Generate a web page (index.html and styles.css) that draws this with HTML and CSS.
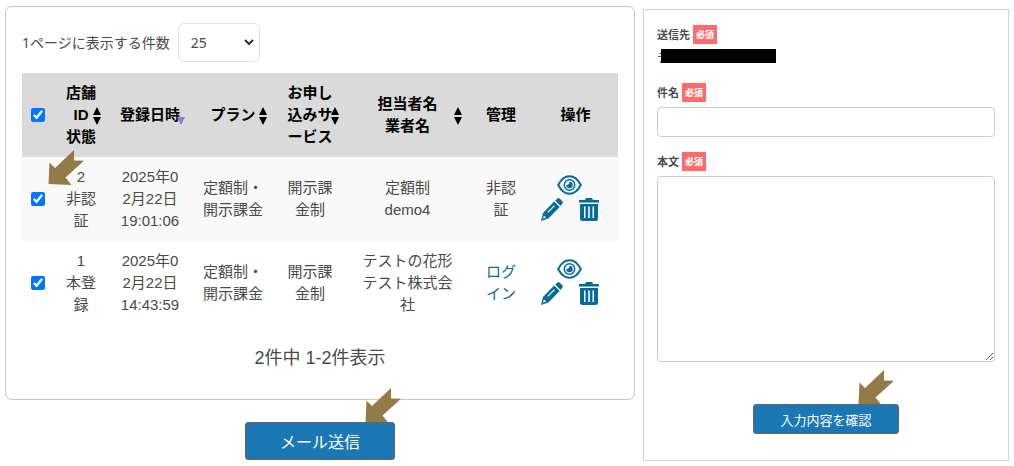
FILE: index.html
```
<!DOCTYPE html>
<html lang="ja">
<head>
	<meta charset="utf-8">
	<meta name="viewport" content="width=device-width, initial-scale=1">
	<title>メール送信</title>
	<link rel="stylesheet" href="styles.css">
</head>
<body>
	<svg class="defs" aria-hidden="true">
		<symbol id="arrow" viewBox="0 0 36 36">
			<path d="M26 0v10.500l10 .3L17.500 27.500l6 7.500L.5 34 1.500 12.500 7 18z"/>
		</symbol>
		<symbol id="sort" viewBox="0 0 8 18">
			<path d="M4 0l4 8H0zM0 10h8l-4 8z"/>
		</symbol>
		<symbol id="eye" viewBox="0 0 25 20">
			<path d="M1.200 10C4 4.500 8 1.300 12.500 1.300S21 4.500 23.800 10C21 15.500 17 18.700 12.500 18.700S4 15.500 1.200 10z" fill="none" stroke="currentColor" stroke-width="2"/>
			<circle cx="12.500" cy="10" r="5.200" fill="none" stroke="currentColor" stroke-width="1.500"/>
			<path d="M12.500 6.800a3.200 3.200 0 1 1-3.200 3.200q2.800 .2 3.200-3.200z"/>
		</symbol>
		<symbol id="pencil" viewBox="0 0 22 23">
			<path fill-rule="evenodd" d="M13.200 3.500l5.500 5.500L7.400 20.600 0 23l2-8zM13 7.200L6.300 13.900l.9.900 6.700-6.700zM2.900 17.500l-.9 3.300 3.100-1.200z"/>
			<path d="M14.200 2.600l2.100-1.900q1.200-1.200 2.500 0l2.500 2.500q1.200 1.300 0 2.500l-1.800 2.200z"/>
		</symbol>
		<symbol id="trash" viewBox="0 0 20 23">
			<path fill-rule="evenodd" d="M0 2h6l1-2h6l1 2h6v2.500H0zM1 6h18v14.500q0 2.500-2.500 2.500h-13Q1 23 1 20.500zM5 8.500v11.500h1.500V8.500zm4.200 0v11.500h1.600V8.500zm4.300 0v11.500H15V8.500z"/>
		</symbol>
	</svg>

	<main class="page">
		<section class="list">
			<div class="panel">
				<div class="per-page">
					<label for="limit">1ページに表示する件数</label>
					<span class="select">
						<select id="limit">
							<option>25</option>
							<option>50</option>
							<option>100</option>
						</select>
						<svg viewBox="0 0 10 7"><path d="M1 1l4 4 4-4"/></svg>
					</span>
				</div>

				<table>
					<colgroup>
						<col class="c-check">
						<col class="c-id">
						<col class="c-date">
						<col class="c-plan">
						<col class="c-service">
						<col class="c-person">
						<col class="c-admin">
						<col class="c-action">
					</colgroup>
					<thead>
						<tr>
							<th class="check"><input type="checkbox" aria-label="すべて選択" checked></th>
							<th>店舗<br>ID<br>状態<svg class="sort"><use href="#sort"/></svg></th>
							<th>登録日時<svg class="sort desc" viewBox="0 0 8 18"><path d="M0 10h8l-4 8z"/></svg></th>
							<th>プラン<svg class="sort"><use href="#sort"/></svg></th>
							<th>お申し込みサービス<svg class="sort"><use href="#sort"/></svg></th>
							<th>担当者名<br>業者名<svg class="sort"><use href="#sort"/></svg></th>
							<th>管理</th>
							<th>操作</th>
						</tr>
					</thead>
					<tbody>
						<tr>
							<td class="check">
								<input type="checkbox" aria-label="2を選択" checked>
								<svg class="arrow"><use href="#arrow"/></svg>
							</td>
							<td>2<br>非認証</td>
							<td>2025年02月22日 19:01:06</td>
							<td>定額制・開示課金</td>
							<td>開示課金制</td>
							<td>定額制<br>demo4</td>
							<td>非認証</td>
							<td class="action">
								<a href="#" class="view" aria-label="詳細"><svg><use href="#eye"/></svg></a>
								<div class="tools">
									<a href="#" class="edit" aria-label="編集"><svg><use href="#pencil"/></svg></a>
									<a href="#" class="delete" aria-label="削除"><svg><use href="#trash"/></svg></a>
								</div>
							</td>
						</tr>
						<tr>
							<td class="check"><input type="checkbox" aria-label="1を選択" checked></td>
							<td>1<br>本登録</td>
							<td>2025年02月22日 14:43:59</td>
							<td>定額制・開示課金</td>
							<td>開示課金制</td>
							<td>テストの花形<br>テスト株式会社</td>
							<td><a href="#">ログイン</a></td>
							<td class="action">
								<a href="#" class="view" aria-label="詳細"><svg><use href="#eye"/></svg></a>
								<div class="tools">
									<a href="#" class="edit" aria-label="編集"><svg><use href="#pencil"/></svg></a>
									<a href="#" class="delete" aria-label="削除"><svg><use href="#trash"/></svg></a>
								</div>
							</td>
						</tr>
					</tbody>
				</table>

				<p class="count">2件中 1-2件表示</p>
			</div>

			<div class="submit">
				<svg class="arrow"><use href="#arrow"/></svg>
				<button type="button" class="btn btn-large">メール送信</button>
			</div>
		</section>

		<form class="mail">
			<div class="field">
				<div class="label">送信先 <span class="required">必須</span></div>
				<div class="recipient">テ<span class="mask"></span></div>
			</div>
			<div class="field">
				<label class="label" for="subject">件名 <span class="required">必須</span></label>
				<input type="text" id="subject">
			</div>
			<div class="field">
				<label class="label" for="body">本文 <span class="required">必須</span></label>
				<textarea id="body"></textarea>
			</div>
			<div class="submit">
				<svg class="arrow"><use href="#arrow"/></svg>
				<button type="button" class="btn">入力内容を確認</button>
			</div>
		</form>
	</main>
</body>
</html>
```
FILE: styles.css
```
* {
	box-sizing: border-box;
}
body {
	margin: 0;
	background: #fff;
	color: #4a4a4a;
	font-family: "Liberation Sans", "Noto Sans CJK JP", sans-serif;
	font-size: 15px;
	line-height: 22px;
}
svg {
	display: block;
	fill: currentColor;
}
a {
	color: #066b96;
	text-decoration: none;
}
.defs {
	position: absolute;
	width: 0;
	height: 0;
}

.page {
	display: grid;
	grid-template-columns: minmax(0, 630fr) minmax(0, 366fr);
	align-items: start;
	gap: 8px;
	padding: 6px 5px;
}

/* list */
.panel {
	padding: 16px;
	border: 1px solid #ccc;
	border-radius: 6px;
	box-shadow: inset 0 0 1px #ccc;
}
.per-page {
	display: flex;
	align-items: center;
	gap: 8px;
	margin-bottom: 11px;
	font-family: "Noto Sans", "Noto Sans CJK JP", sans-serif;
	font-size: 14px;
}
.select {
	position: relative;
}
.select select {
	display: block;
	width: 82px;
	height: 39px;
	padding: 0 12px;
	border: 1px solid #e3e3e3;
	border-radius: 6px;
	background: #fff;
	color: #4a4a4a;
	font: inherit;
	appearance: none;
}
.select svg {
	position: absolute;
	top: 16px;
	right: 6px;
	width: 10px;
	height: 7px;
	fill: none;
	stroke: #333;
	stroke-width: 2;
	pointer-events: none;
}

table {
	width: 100%;
	table-layout: fixed;
	border-collapse: collapse;
	text-align: center;
	word-break: break-all;
	line-break: anywhere;
}
.c-check { width: 32px; }
.c-id { width: 54px; }
.c-date { width: 84px; }
.c-plan { width: 82px; }
.c-service { width: 72px; }
.c-person { width: 123px; }
.c-admin { width: 64px; }
.c-action { width: 85px; }
th,
td {
	position: relative;
	height: 84px;
	padding: 9px 10px;
	vertical-align: middle;
}
th {
	background: #dadada;
	color: #000;
	font-weight: bold;
}
tbody tr:nth-child(odd) {
	background: #f9f9f9;
}
.check {
	padding: 0;
}
.check input {
	display: block;
	width: 14px;
	height: 14px;
	margin: 0 auto;
}
.sort {
	position: absolute;
	top: 50%;
	right: 7px;
	width: 8px;
	height: 18px;
	margin-top: -8px;
}
.sort.desc {
	color: #8080e0;
}
td.action {
	padding: 0 12px 2px 0;
}
.view svg {
	width: 25px;
	height: 20px;
	margin: 0 auto 3px;
}
.tools {
	display: flex;
	justify-content: center;
	gap: 16px;
}
.edit svg {
	width: 22px;
	height: 23px;
}
.delete svg {
	width: 20px;
	height: 23px;
}
.count {
	margin: 22px 0 14px;
	font-size: 18px;
	text-align: center;
}

/* buttons and arrows */
.submit {
	position: relative;
	width: fit-content;
	margin: 22px auto 0;
}
.btn {
	position: relative;
	display: block;
	height: 30px;
	padding: 0 26px;
	border: 1px solid #666;
	border-radius: 3px;
	background: #1b78b5;
	color: #fff;
	font-family: "Noto Sans CJK JP", sans-serif;
	font-size: 13px;
}
.btn-large {
	height: 38px;
	padding: 0 34px;
	font-size: 16px;
}
.arrow {
	position: absolute;
	top: -34px;
	right: -6px;
	width: 36px;
	height: 36px;
	color: #937b49;
}
.check .arrow {
	top: -7px;
	right: auto;
	left: 26px;
	z-index: 1;
}

/* mail form */
.mail {
	margin-top: 3px;
	padding: 15px 13px 26px;
	border: 1px solid #d3d3d3;
	font-family: "Noto Sans CJK JP", sans-serif;
	font-size: 11px;
}
.field {
	margin-bottom: 15px;
}
.label {
	display: flex;
	align-items: center;
	gap: 3px;
	margin-bottom: 5px;
	font-weight: bold;
	line-height: 19px;
}
.required {
	padding: 0 3px;
	background: #ff6b6b;
	color: #fff;
	font-size: 9px;
	font-weight: 900;
}
.recipient {
	position: relative;
	height: 19px;
	line-height: 16px;
}
.mask {
	position: absolute;
	top: 0;
	left: 4px;
	width: 115px;
	height: 14px;
	background: #000;
}
.mail input,
.mail textarea {
	display: block;
	width: 100%;
	height: 30px;
	padding: 4px 8px;
	border: 1px solid #ccc;
	border-radius: 4px;
	font: inherit;
}
.mail textarea {
	height: 186px;
}
.mail .submit {
	margin-top: 42px;
}
.mail .arrow {
	right: 5px;
}
```
